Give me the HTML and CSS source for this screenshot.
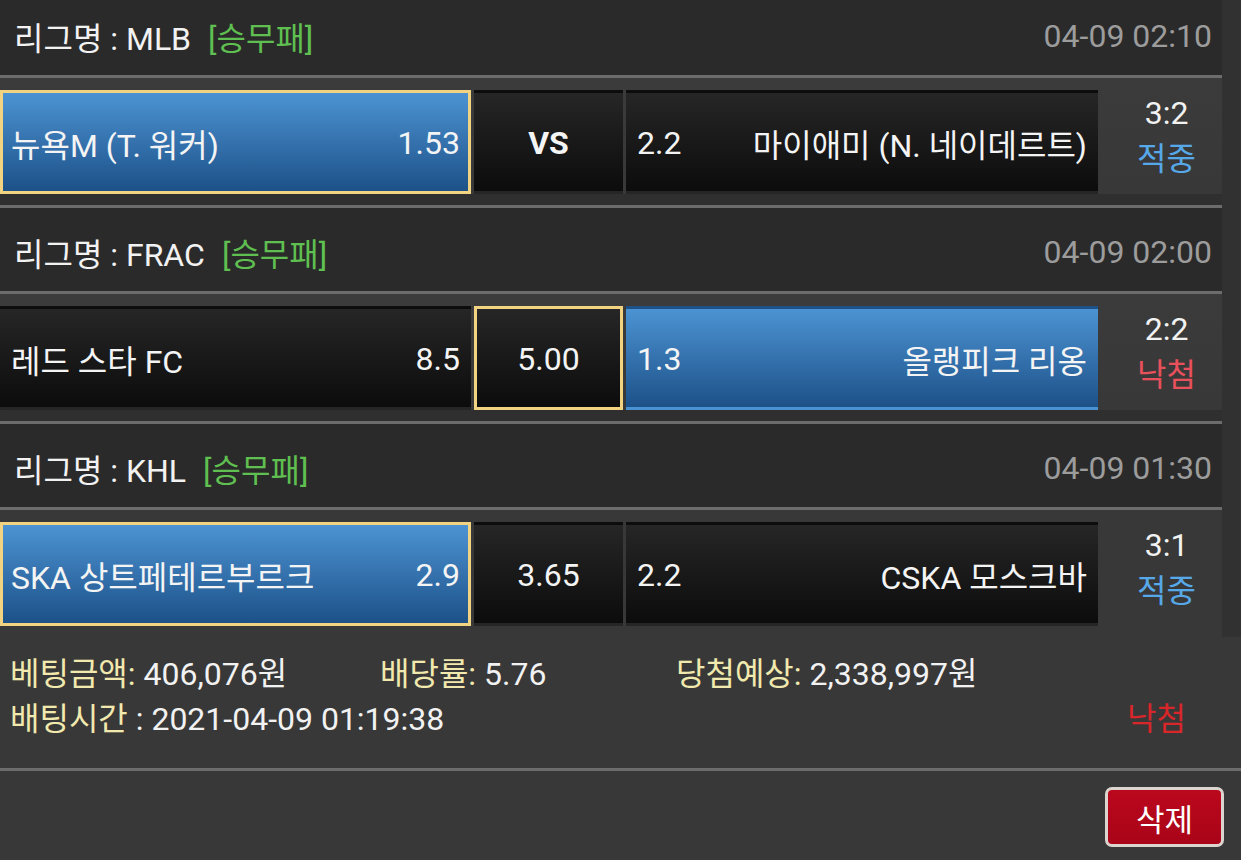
FILE: index.html
```html
<!DOCTYPE html>
<html lang="ko">
<head>
<meta charset="utf-8">
<link rel="stylesheet" href="styles.css">
</head>
<body>
<div class="page">
  <div class="list">
    <section class="game">
      <div class="league"><span class="lname">리그명 : MLB</span><span class="ltype">[승무패]</span><span class="ltime">04-09 02:10</span></div>
      <div class="match">
        <div class="cell home blue picked"><span>뉴욕M (T. 워커)</span><span>1.53</span></div>
        <div class="cell draw dark"><b class="vs">VS</b></div>
        <div class="cell away dark"><span>2.2</span><span>마이애미 (N. 네이데르트)</span></div>
        <div class="score"><span>3:2</span><span class="hit">적중</span></div>
      </div>
    </section>
    <section class="game">
      <div class="league"><span class="lname">리그명 : FRAC</span><span class="ltype">[승무패]</span><span class="ltime">04-09 02:00</span></div>
      <div class="match">
        <div class="cell home dark"><span>레드 스타 FC</span><span>8.5</span></div>
        <div class="cell draw dark picked"><span>5.00</span></div>
        <div class="cell away blue"><span>1.3</span><span>올랭피크 리옹</span></div>
        <div class="score"><span>2:2</span><span class="miss">낙첨</span></div>
      </div>
    </section>
    <section class="game">
      <div class="league"><span class="lname">리그명 : KHL</span><span class="ltype">[승무패]</span><span class="ltime">04-09 01:30</span></div>
      <div class="match last">
        <div class="cell home blue picked"><span>SKA 상트페테르부르크</span><span>2.9</span></div>
        <div class="cell draw dark"><span>3.65</span></div>
        <div class="cell away dark"><span>2.2</span><span>CSKA 모스크바</span></div>
        <div class="score"><span>3:1</span><span class="hit">적중</span></div>
      </div>
    </section>
  </div>
  <div class="betinfo">
    <div class="brow">
      <span class="bcol c1"><span class="lbl">베팅금액:</span> 406,076원</span>
      <span class="bcol c2"><span class="lbl">배당률:</span> 5.76</span>
      <span class="bcol c3"><span class="lbl">당첨예상:</span> 2,338,997원</span>
    </div>
    <div class="brow">
      <span class="bcol"><span class="lbl">배팅시간</span> : 2021-04-09 01:19:38</span>
      <span class="result">낙첨</span>
    </div>
  </div>
  <div class="footer">
    <button class="del">삭제</button>
  </div>
</div>
</body>
</html>
```

FILE: styles.css
```css
* { box-sizing: border-box; }
html, body { margin: 0; padding: 0; }
body {
  background: #383838;
  color: #f2f2f2;
  font-family: Roboto, "Noto Sans CJK KR", sans-serif;
  font-size: 32px;
  width: 1241px;
  height: 860px;
  overflow: hidden;
}
.page { margin-top: -8px; }
.list {
  background: #313131;
  padding-right: 19px;
}
.league {
  height: 86px;
  background: #2a2a2a;
  border-bottom: 3px solid #6c6c6c;
  display: flex;
  align-items: center;
  padding: 4px 10px 0 14px;
  white-space: nowrap;
}
.ltype { color: #5fbf50; margin-left: 17px; }
.ltime { color: #9c9c9c; margin-left: auto; }
.match {
  display: grid;
  grid-template-columns: 471px 149px 472px 121px;
  column-gap: 3px;
  padding: 12px 0 11px;
  background: linear-gradient(#3b3b3b 0, #383838 116px, #2f2f2f 116px, #2f2f2f 100%);
  border-bottom: 3px solid #6c6c6c;
}
.match.last { border-bottom: 0; background: #383838; }
.cell {
  height: 104px;
  border: 3px solid transparent;
  display: flex;
  align-items: center;
  justify-content: space-between;
  padding: 2px 8px 0;
  color: #f4f4f4;
  white-space: nowrap;
}
.cell.draw { justify-content: center; }
.dark { background: linear-gradient(#262626, #0c0c0c); }
.blue { background: linear-gradient(#4c93d3, #1d5188); }
.picked { border-color: #f2d382; }
.vs { font-weight: 700; }
.score {
  display: flex;
  flex-direction: column;
  align-items: center;
  padding-left: 10px;
  line-height: 46px;
}
.hit { color: #56a8e8; }
.miss { color: #e8505c; }
.betinfo {
  padding: 11px 0 30px 10px;
  border-bottom: 3px solid #6c6c6c;
}
.brow {
  display: flex;
  height: 45px;
  align-items: center;
  white-space: nowrap;
}
.lbl { color: #f1e9ad; }
.c1 { width: 370px; }
.c2 { width: 296px; }
.result { color: #d8262a; margin-left: auto; margin-right: 55px; }
.footer {
  display: flex;
  justify-content: flex-end;
  padding: 16px 17px 0 0;
}
.del {
  width: 119px;
  height: 60px;
  background: linear-gradient(#bb081d, #a90418);
  border: 3px solid #dcd5cf;
  border-radius: 7px;
  color: #fff;
  font-family: Roboto, "Noto Sans CJK KR", sans-serif;
  font-size: 31px;
  padding: 0;
}
```
